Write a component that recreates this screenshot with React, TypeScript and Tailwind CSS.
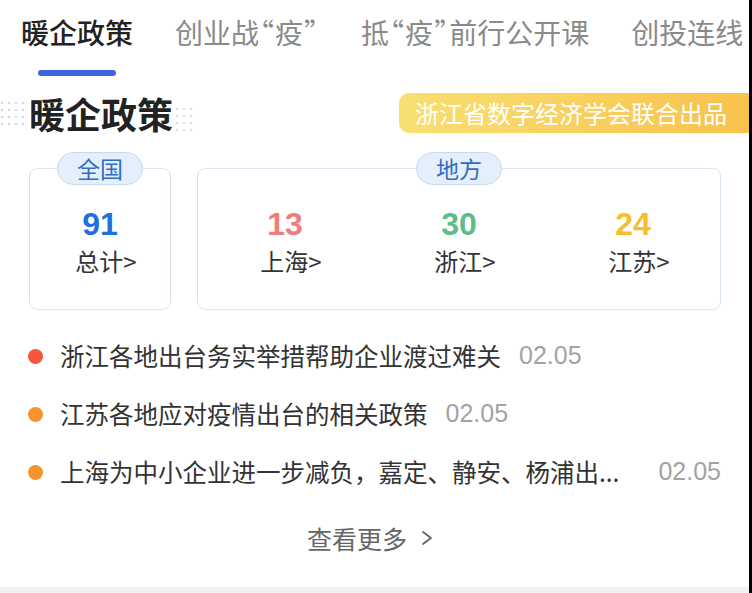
import React from "react";

function Dots({ cols, rows, className }: { cols: number; rows: number; className: string }) {
  const items: React.ReactElement[] = [];
  for (let r = 0; r < rows; r++) {
    for (let c = 0; c < cols; c++) {
      items.push(<circle key={`${r}-${c}`} cx={2 + c * 7} cy={2 + r * 7} r={1.3} fill="#c9d3e3" />);
    }
  }
  return (
    <svg className={className} width={cols * 7} height={rows * 7} viewBox={`0 0 ${cols * 7} ${rows * 7}`}>
      {items}
    </svg>
  );
}

function Pill({ label }: { label: string }) {
  return (
    <div className="absolute -top-[17px] left-1/2 -translate-x-1/2 h-[33px] w-[86px] rounded-full border border-[#c6d9f1] bg-[#e5effc] flex items-center justify-center text-[23px] leading-none text-[#2f6ec4]">
      {label}
    </div>
  );
}

function Stat({ num, color, label }: { num: string; color: string; label: string }) {
  return (
    <div className="flex flex-col items-center">
      <div className={`font-['Liberation_Sans',Arial,sans-serif] font-bold text-[32px] leading-[32px] ${color}`}>{num}</div>
      <div className="mt-[9px] pl-[12px] text-[24px] leading-[24px] text-[#333]">{label}</div>
    </div>
  );
}

function Q({ ch }: { ch: string }) {
  return <span className="px-[1px] [font-feature-settings:'halt']">{ch}</span>;
}

export default function App() {
  return (
    <div className="relative flex h-[593px] w-[752px] flex-col overflow-hidden bg-white font-['Noto_Sans_CJK_SC',sans-serif]">
      {/* tabs */}
      <div className="flex gap-[42px] whitespace-nowrap pl-[21px] pt-[17px] text-[28px] leading-[30px]">
        <span className="font-medium text-[#222]">暖企政策</span>
        <span className="text-[#8a8a8a]">
          创业战<Q ch="“" />疫<Q ch="”" />
        </span>
        <span className="text-[#8a8a8a]">
          抵<Q ch="“" />疫<Q ch="”" />前行公开课
        </span>
        <span className="text-[#8a8a8a]">创投连线</span>
      </div>
      <div className="ml-[38px] mt-[23px] h-[6px] w-[78px] rounded-full bg-[#3d63dd]" />

      {/* title row */}
      <div className="mt-[17px] flex h-[40px] items-center justify-between">
        <div className="relative ml-[29px]">
          <Dots cols={4} rows={4} className="absolute -left-[29px] top-[8px] opacity-80" />
          <Dots cols={3} rows={4} className="absolute left-[146px] top-[14px] opacity-70" />
          <h2 className="relative text-[36px] font-bold leading-[40px] text-[#222]">暖企政策</h2>
        </div>
        <div className="h-[40px] w-[353px] whitespace-nowrap rounded-l-[10px] bg-gradient-to-r from-[#f9df72] to-[#f7c24c] pl-[16px] text-[24px] leading-[40px] text-white">
          浙江省数字经济学会联合出品
        </div>
      </div>

      {/* cards */}
      <div className="mt-[35px] flex gap-[26px] pl-[29px]">
        <div className="relative h-[142px] w-[142px] rounded-[8px] border border-[#d9e4f2] pt-[39px]">
          <Pill label="全国" />
          <Stat num="91" color="text-[#1f6fdc]" label="总计>" />
        </div>
        <div className="relative grid h-[142px] w-[524px] grid-cols-3 rounded-[8px] border border-[#d9e4f2] pt-[39px]">
          <Pill label="地方" />
          <Stat num="13" color="text-[#f07c7c]" label="上海>" />
          <Stat num="30" color="text-[#5cbd8c]" label="浙江>" />
          <Stat num="24" color="text-[#f6bd2c]" label="江苏>" />
        </div>
      </div>

      {/* list */}
      <div className="mt-[17px] flex flex-col pl-[28px] pr-[31px] text-[24.5px]">
        <div className="flex h-[58px] items-center">
          <span className="mr-[17px] h-[15px] w-[15px] shrink-0 rounded-full bg-[#f4553b]" />
          <span className="whitespace-nowrap text-[#333]">浙江各地出台务实举措帮助企业渡过难关</span>
          <span className="ml-[18px] font-['Liberation_Sans',Arial,sans-serif] text-[25px] text-[#a3a3a3]">02.05</span>
        </div>
        <div className="flex h-[58px] items-center">
          <span className="mr-[17px] h-[15px] w-[15px] shrink-0 rounded-full bg-[#f8922c]" />
          <span className="whitespace-nowrap text-[#333]">江苏各地应对疫情出台的相关政策</span>
          <span className="ml-[18px] font-['Liberation_Sans',Arial,sans-serif] text-[25px] text-[#a3a3a3]">02.05</span>
        </div>
        <div className="flex h-[58px] items-center">
          <span className="mr-[17px] h-[15px] w-[15px] shrink-0 rounded-full bg-[#f8922c]" />
          <span className="whitespace-nowrap text-[#333]">上海为中小企业进一步减负，嘉定、静安、杨浦出...</span>
          <span className="ml-auto font-['Liberation_Sans',Arial,sans-serif] text-[25px] text-[#a3a3a3]">02.05</span>
        </div>
      </div>

      {/* more */}
      <div className="mt-[19px] flex h-[36px] items-center justify-center pr-[12px] text-[25px] leading-[36px] text-[#666]">
        <span>查看更多</span>
        <svg className="ml-[14px]" width="12" height="16" viewBox="0 0 12 16">
          <polyline points="2,2 10,8 2,14" fill="none" stroke="#666" strokeWidth="1.8" strokeLinecap="round" strokeLinejoin="round" />
        </svg>
      </div>

      <div className="mt-auto h-[6px] bg-[#f2f2f2]" />

      <div className="absolute right-0 top-0 h-full w-[3px] bg-black" />
    </div>
  );
}
